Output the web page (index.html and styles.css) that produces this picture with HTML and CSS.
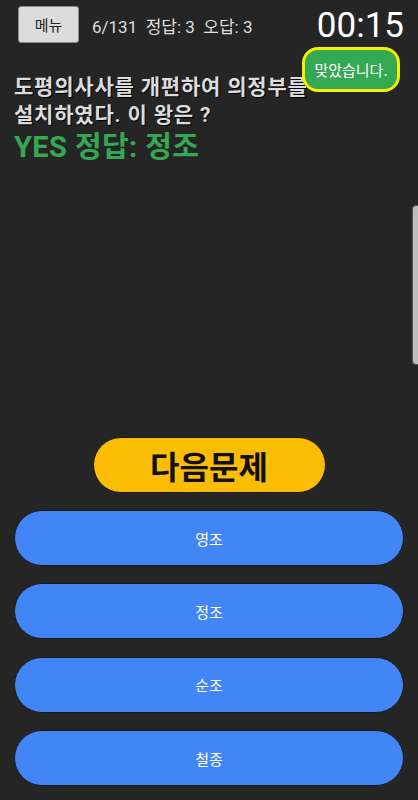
FILE: index.html
```html
<!DOCTYPE html>
<html lang="ko">
  <head>
    <meta charset="utf-8" />
    <meta name="viewport" content="width=device-width, initial-scale=1.0" />
    <title>퀴즈</title>
    <link rel="stylesheet" href="styles.css">
  </head>

  <body>
    <main class="quiz">
      <header class="topbar">
        <button class="menu-knap">메뉴</button>
        <p class="status">6/131&nbsp; 정답: 3&nbsp; 오답: 3</p>
        <p class="timer">00:15</p>
      </header>

      <section class="spoergsmaal">
        <h2 class="tekst">도평의사사를 개편하여 의정부를 설치하였다. 이 왕은 ?</h2>
        <p class="svar">YES 정답: 정조</p>
      </section>

      <section class="knapper">
        <button class="naeste">다음문제</button>
        <button class="valg">영조</button>
        <button class="valg">정조</button>
        <button class="valg">순조</button>
        <button class="valg">철종</button>
      </section>
    </main>

    <!-- toast og scrollbar ligger ovenpå -->
    <div class="toast">맞았습니다.</div>
    <div class="scrollbar"></div>
  </body>
</html>
```

FILE: styles.css
```css
body {
  margin: 0;
  background-color: #252525;
  font-family: Roboto, "Noto Sans CJK KR", sans-serif;
  color: #e0e0e0;
}

button {
  font-family: Roboto, "Noto Sans CJK KR", sans-serif;
  cursor: pointer;
}

.quiz {
  display: flex;
  flex-direction: column;
  height: 800px;
  box-sizing: border-box;
  padding: 0 14px 14px 14px;
}

.topbar {
  display: flex;
  align-items: center;
  height: 50px;
  padding-left: 4px;
}

.menu-knap {
  width: 61px;
  height: 37px;
  margin-top: -1px;
  background-color: #dcdcdc;
  border: 1px solid #888;
  border-radius: 3px;
  font-size: 15px;
  color: #222;
}

.status {
  margin: 0 0 0 13px;
  font-size: 17px;
  color: #dedede;
}

.timer {
  margin: 0 0 0 auto;
  font-size: 35px;
  color: #fff;
}

.spoergsmaal {
  margin-top: 23px;
}

.tekst {
  margin: 0;
  font-size: 21px;
  line-height: 28px;
  letter-spacing: 0.8px;
  word-break: keep-all;
  font-weight: bold;
  color: #dcdcdc;
  text-shadow: 1px 1px 0 #000;
  padding-right: 6px;
}

.svar {
  margin: 1px 0 0 0;
  font-size: 29px;
  line-height: 34px;
  letter-spacing: 0.4px;
  font-weight: bold;
  color: #34a853;
}

.knapper {
  margin-top: auto;
  display: flex;
  flex-direction: column;
  align-items: center;
  gap: 17.3px;
}

.naeste {
  width: 233px;
  height: 56px;
  background-color: #fbbc04;
  border: 1px solid #1a1a1a;
  border-radius: 28px;
  font-size: 32px;
  font-weight: bold;
  color: #111;
}

.valg {
  width: 100%;
  height: 56px;
  background-color: #4285f4;
  border: 1px solid #1a1a1a;
  border-radius: 28px;
  font-size: 15px;
  color: #fff;
}

.toast {
  position: absolute;
  top: 47px;
  left: 302px;
  width: 92px;
  height: 39px;
  display: flex;
  align-items: center;
  justify-content: center;
  background-color: #34a853;
  border: 3px solid #f5f000;
  border-radius: 16px;
  font-family: "Noto Sans CJK KR", sans-serif;
  font-size: 15px;
  color: #fff;
}

.scrollbar {
  position: absolute;
  top: 205px;
  left: 412px;
  width: 8px;
  height: 158px;
  background-color: #bcbcbc;
  border: 1px solid #555;
  border-radius: 4px;
}
```
